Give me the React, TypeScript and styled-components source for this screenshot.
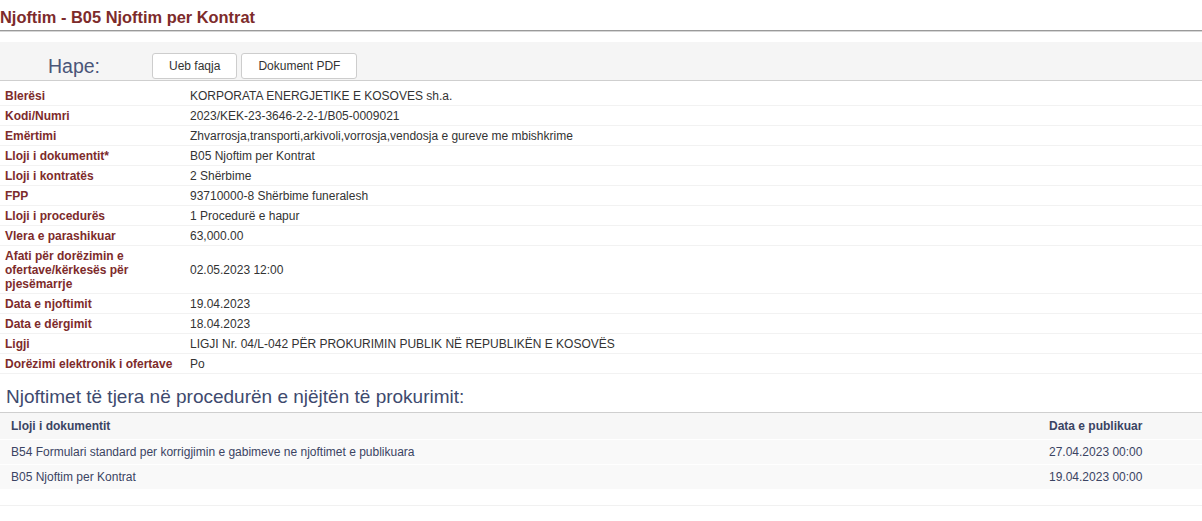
import React from 'react';
import styled, { createGlobalStyle } from 'styled-components';

const GlobalStyle = createGlobalStyle`
  body {
    margin: 0;
    background: #fff;
    font-family: "Liberation Sans", Arial, sans-serif;
    font-size: 12px;
    color: #333;
  }
`;

const Page = styled.div`
  width: 1202px;
  padding-bottom: 14px;
`;

const Title = styled.h1`
  margin: 0;
  height: 30px;
  line-height: 34px;
  font-size: 16.4px;
  font-weight: bold;
  color: #7d2b2b;
  border-bottom: 1px solid #9a9a9a;
  box-shadow: 0 1px 0 #d6d6d6;
`;

const OpenBar = styled.div`
  margin-top: 11px;
  display: flex;
  align-items: flex-end;
  gap: 4px;
  height: 38px;
  background: #f5f5f5;
  border-bottom: 1px solid #cfcfcf;
`;

const OpenLabel = styled.span`
  width: 148px;
  text-align: center;
  font-size: 19.5px;
  line-height: 26px;
  padding-bottom: 1px;
  color: #4a5679;
`;

const OpenButton = styled.button`
  height: 26px;
  margin-bottom: 1px;
  padding: 0 16px;
  background: #fff;
  border: 1px solid #cdcdcd;
  border-radius: 3px;
  font-family: "Liberation Sans", Arial, sans-serif;
  font-size: 12px;
  color: #333;
`;

const Details = styled.div`
  margin-top: 5px;
`;

const DetailRow = styled.div`
  display: flex;
  align-items: center;
  border-bottom: 1px solid #f2f2f2;
  line-height: 14px;
  padding: 3px 0 2px;
`;

const Label = styled.div`
  width: 190px;
  padding-left: 5px;
  box-sizing: border-box;
  padding-right: 14px;
  font-weight: bold;
  color: #7d2b2b;
`;

const Value = styled.div`
  flex: 1;
  color: #333;
`;

const SectionTitle = styled.h2`
  margin: 11px 0 0;
  padding: 0 6px 3px;
  font-size: 19px;
  font-weight: normal;
  line-height: 24px;
  color: #3e4a6e;
  border-bottom: 1px solid #cfcfcf;
`;

const Table = styled.table`
  width: 100%;
  border-collapse: collapse;
  color: #3b4463;
`;

const HeadCell = styled.th<{ wide?: boolean }>`
  text-align: left;
  font-weight: bold;
  height: 26px;
  padding: 0 11px;
  background: #f7f7f7;
  width: ${({ wide }) => (wide ? 'auto' : '142px')};
  border-bottom: 1px solid #fff;
`;

const Cell = styled.td`
  height: 24px;
  padding: 0 11px;
  background: #f9f9f9;
  border-bottom: 1px solid #fff;
  color: #3b4463;
`;

const Footer = styled.div`
  height: 15px;
  border-bottom: 1px solid #f1f1f1;
`;

const details: [string, string][] = [
  ['Blerësi', 'KORPORATA ENERGJETIKE E KOSOVES sh.a.'],
  ['Kodi/Numri', '2023/KEK-23-3646-2-2-1/B05-0009021'],
  ['Emërtimi', 'Zhvarrosja,transporti,arkivoli,vorrosja,vendosja e gureve me mbishkrime'],
  ['Lloji i dokumentit*', 'B05 Njoftim per Kontrat'],
  ['Lloji i kontratës', '2 Shërbime'],
  ['FPP', '93710000-8 Shërbime funeralesh'],
  ['Lloji i procedurës', '1 Procedurë e hapur'],
  ['Vlera e parashikuar', '63,000.00'],
  ['Afati për dorëzimin e ofertave/kërkesës për pjesëmarrje', '02.05.2023 12:00'],
  ['Data e njoftimit', '19.04.2023'],
  ['Data e dërgimit', '18.04.2023'],
  ['Ligji', 'LIGJI Nr. 04/L-042 PËR PROKURIMIN PUBLIK NË REPUBLIKËN E KOSOVËS'],
  ['Dorëzimi elektronik i ofertave', 'Po'],
];

const notices = [
  { doc: 'B54 Formulari standard per korrigjimin e gabimeve ne njoftimet e publikuara', date: '27.04.2023 00:00' },
  { doc: 'B05 Njoftim per Kontrat', date: '19.04.2023 00:00' },
];

export default function App() {
  return (
    <Page>
      <GlobalStyle />
      <Title>Njoftim - B05 Njoftim per Kontrat</Title>
      <OpenBar>
        <OpenLabel>Hape:</OpenLabel>
        <OpenButton>Ueb faqja</OpenButton>
        <OpenButton>Dokument PDF</OpenButton>
      </OpenBar>
      <Details>
        {details.map(([label, value]) => (
          <DetailRow key={label}>
            <Label>{label}</Label>
            <Value>{value}</Value>
          </DetailRow>
        ))}
      </Details>
      <SectionTitle>Njoftimet të tjera në procedurën e njëjtën të prokurimit:</SectionTitle>
      <Table>
        <thead>
          <tr>
            <HeadCell wide>Lloji i dokumentit</HeadCell>
            <HeadCell>Data e publikuar</HeadCell>
          </tr>
        </thead>
        <tbody>
          {notices.map((n) => (
            <tr key={n.doc}>
              <Cell>{n.doc}</Cell>
              <Cell>{n.date}</Cell>
            </tr>
          ))}
        </tbody>
      </Table>
      <Footer />
    </Page>
  );
}
